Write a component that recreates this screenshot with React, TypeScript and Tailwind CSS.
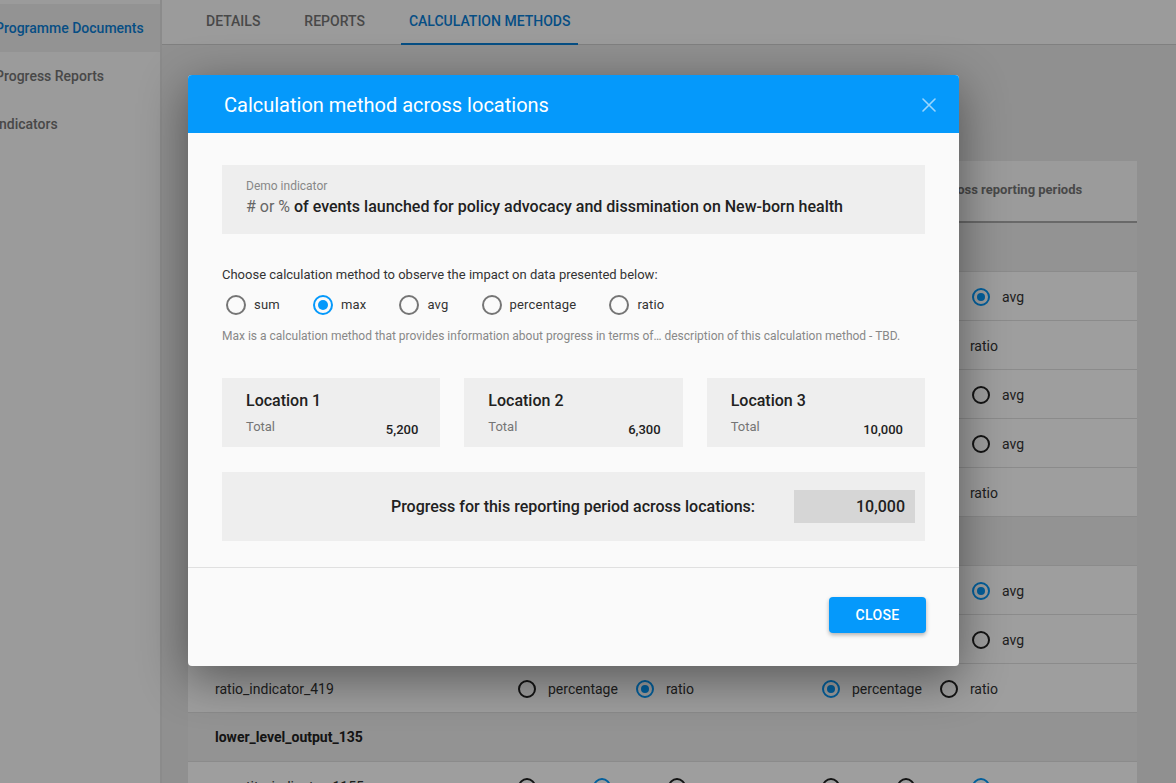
type Opt = { label: string; on?: boolean };

type Row =
  | { kind: "section"; name: string }
  | { kind: "item"; name: string; mid: Opt[]; right: Opt[] };

const smaOpts = (on: number): Opt[] =>
  ["sum", "max", "avg"].map((label, i) => ({ label, on: i === on }));
const prOpts = (on: number): Opt[] =>
  ["percentage", "ratio"].map((label, i) => ({ label, on: i === on }));

const rows: Row[] = [
  { kind: "section", name: "lower_level_output_128" },
  { kind: "item", name: "quantity_indicator_1120", mid: smaOpts(1), right: smaOpts(2) },
  { kind: "item", name: "ratio_indicator_402", mid: prOpts(0), right: prOpts(1) },
  { kind: "item", name: "quantity_indicator_1121", mid: smaOpts(0), right: smaOpts(1) },
  { kind: "item", name: "quantity_indicator_1122", mid: smaOpts(1), right: smaOpts(0) },
  { kind: "item", name: "ratio_indicator_403", mid: prOpts(1), right: prOpts(1) },
  { kind: "section", name: "lower_level_output_131" },
  { kind: "item", name: "quantity_indicator_1140", mid: smaOpts(0), right: smaOpts(2) },
  { kind: "item", name: "quantity_indicator_1141", mid: smaOpts(1), right: smaOpts(1) },
  { kind: "item", name: "ratio_indicator_419", mid: prOpts(1), right: prOpts(0) },
  { kind: "section", name: "lower_level_output_135" },
  { kind: "item", name: "quantity_indicator_1155", mid: smaOpts(1), right: smaOpts(2) },
];

const locations = [
  { name: "Location 1", total: "5,200" },
  { name: "Location 2", total: "6,300" },
  { name: "Location 3", total: "10,000" },
];

const methods = ["sum", "max", "avg", "percentage", "ratio"];

function PageRadio({ label, on }: Opt) {
  return (
    <div className="flex items-center mr-[18px]">
      <span
        className={`w-[18px] h-[18px] rounded-full border-[2.5px] flex items-center justify-center ${
          on ? "border-[#0599fb]" : "border-[#212121]"
        }`}
      >
        {on && <span className="w-2 h-2 rounded-full bg-[#0599fb]" />}
      </span>
      <span className="ml-3 text-sm text-[#333]">{label}</span>
    </div>
  );
}

function ModalRadio({ label, on }: Opt) {
  return (
    <div className="flex items-center mr-[33px]">
      <span
        className={`w-5 h-5 rounded-full border-2 flex items-center justify-center ${
          on ? "border-[#0599fb]" : "border-[#757575]"
        }`}
      >
        {on && <span className="w-[10px] h-[10px] rounded-full bg-[#0599fb]" />}
      </span>
      <span className="ml-2 text-[13px] tracking-[0.2px] text-[#333]">{label}</span>
    </div>
  );
}

function Sidebar() {
  const items = ["Programme Documents", "Progress Reports", "Indicators"];
  return (
    <aside className="w-[162px] shrink-0 bg-[#fafafa] border-r-2 border-[#e0e0e0] pt-1">
      {items.map((it, i) => (
        <div
          key={it}
          className={`h-12 flex items-center whitespace-nowrap text-sm font-medium ${
            i === 0 ? "bg-[#eeeeee] text-[#0b7fd6]" : "text-[#757575]"
          }`}
        >
          <span className="-ml-[5px] -mt-px">{it}</span>
        </div>
      ))}
    </aside>
  );
}

function Tabs() {
  const tabs = ["DETAILS", "REPORTS", "CALCULATION METHODS"];
  return (
    <div className="h-[45px] bg-[#fafafa] border-b border-[#cfcfcf] flex items-stretch pl-9 gap-7">
      {tabs.map((t, i) => (
        <div
          key={t}
          className={`px-2 pb-[2px] flex items-center text-sm font-medium border-b-2 -mb-px ${
            i === 2 ? "text-[#0b7fd6] border-[#0b7fd6]" : "text-[#757575] border-transparent"
          }`}
        >
          {t}
        </div>
      ))}
    </div>
  );
}

function Table() {
  return (
    <div className="ml-[26px] mt-[116px] w-[949px] bg-white">
      <div className="h-[62px] grid grid-cols-[330px_304px_1fr] items-center bg-[#fafafa] border-b-2 border-[#aaaaaa] text-[13px] font-bold text-[#757575]">
        <div className="pl-[27px]">Indicator</div>
        <div>Calculation method across locations</div>
        <div className="-mt-[2px]">Calculation method across reporting periods</div>
      </div>
      {rows.map((r, i) =>
        r.kind === "section" ? (
          <div
            key={i}
            className="h-[49px] flex items-center pl-[27px] bg-[#eeeeee] border-b border-[#e0e0e0] text-sm font-bold text-[#212121]"
          >
            {r.name}
          </div>
        ) : (
          <div
            key={i}
            className="h-[49px] grid grid-cols-[330px_304px_1fr] items-center pt-[2px] border-b border-[#e0e0e0] bg-white"
          >
            <div className="pl-[27px] text-sm text-[#333]">{r.name}</div>
            <div className="flex">
              {r.mid.map((o) => (
                <PageRadio key={o.label} {...o} />
              ))}
            </div>
            <div className="flex">
              {r.right.map((o) => (
                <PageRadio key={o.label} {...o} />
              ))}
            </div>
          </div>
        )
      )}
    </div>
  );
}

function Modal() {
  return (
    <div className="absolute left-[188px] top-[75px] w-[771px] bg-[#fafafa] rounded-sm shadow-[0_12px_48px_rgba(0,0,0,0.45)]">
      <div className="h-[58px] bg-[#0599fb] flex items-center justify-between pl-9 pr-[23px] rounded-t-sm">
        <h2 className="mt-[2px] text-xl text-white">Calculation method across locations</h2>
        <svg width="14" height="14" viewBox="0 0 14 14" className="mt-[2px]">
          <path d="M1 1 L13 13 M13 1 L1 13" stroke="rgba(255,255,255,0.6)" strokeWidth="1.6" strokeLinecap="round" />
        </svg>
      </div>

      <div className="px-[34px] pt-8 pb-[26px]">
        <div className="h-[69px] bg-[#eeeeee] px-6 flex flex-col justify-center">
          <div className="text-xs text-[#888]">Demo indicator</div>
          <div className="mt-px mb-[2px] text-base">
            <span className="text-[#666]"># or % </span>
            <span className="text-[#212121] font-medium">
              of events launched for policy advocacy and dissmination on New-born health
            </span>
          </div>
        </div>

        <div className="mt-8 text-[13px] leading-4 text-[#333] pt-px">
          Choose calculation method to observe the impact on data presented below:
        </div>
        <div className="mt-3 flex pl-[4px]">
          {methods.map((m) => (
            <ModalRadio key={m} label={m} on={m === "max"} />
          ))}
        </div>
        <div className="mt-3 text-xs leading-4 text-[#888] pt-px">
          Max is a calculation method that provides information about progress in terms of… description of this calculation method - TBD.
        </div>

        <div className="mt-[34px] grid grid-cols-3 gap-6">
          {locations.map((l) => (
            <div key={l.name} className="h-[69px] bg-[#eeeeee] pl-6 pr-[22px] pt-[13px]">
              <div className="text-base leading-5 font-medium text-[#212121]">{l.name}</div>
              <div className="mt-[8px] flex justify-between items-start">
                <span className="text-[13px] leading-4 text-[#757575]">Total</span>
                <span className="mt-[3px] text-[13px] leading-4 font-medium text-[#212121]">{l.total}</span>
              </div>
            </div>
          ))}
        </div>

        <div className="mt-[25px] h-[69px] bg-[#eeeeee] flex items-center justify-end pr-[10px]">
          <span className="text-base font-medium text-[#212121]">
            Progress for this reporting period across locations:
          </span>
          <div className="ml-[39px] w-[121px] h-[33px] bg-[#d6d6d6] flex items-center justify-end pr-[10px] text-base font-medium text-[#212121]">
            10,000
          </div>
        </div>
      </div>

      <div className="h-[99px] border-t border-[#e0e0e0] flex justify-end items-start pt-[29px] pr-[33px]">
        <button className="w-[97px] h-9 bg-[#0599fb] text-white text-sm font-medium tracking-wide rounded-sm shadow-[0_2px_4px_rgba(0,0,0,0.3)]">
          CLOSE
        </button>
      </div>
    </div>
  );
}

export default function App() {
  return (
    <div className="relative w-full h-[783px] overflow-hidden flex bg-[#e8e8e8] font-[family-name:Roboto,sans-serif]">
      <Sidebar />
      <main className="flex-1 min-w-0">
        <Tabs />
        <Table />
      </main>
      <div className="absolute inset-0 bg-black/[0.38]" />
      <Modal />
    </div>
  );
}
